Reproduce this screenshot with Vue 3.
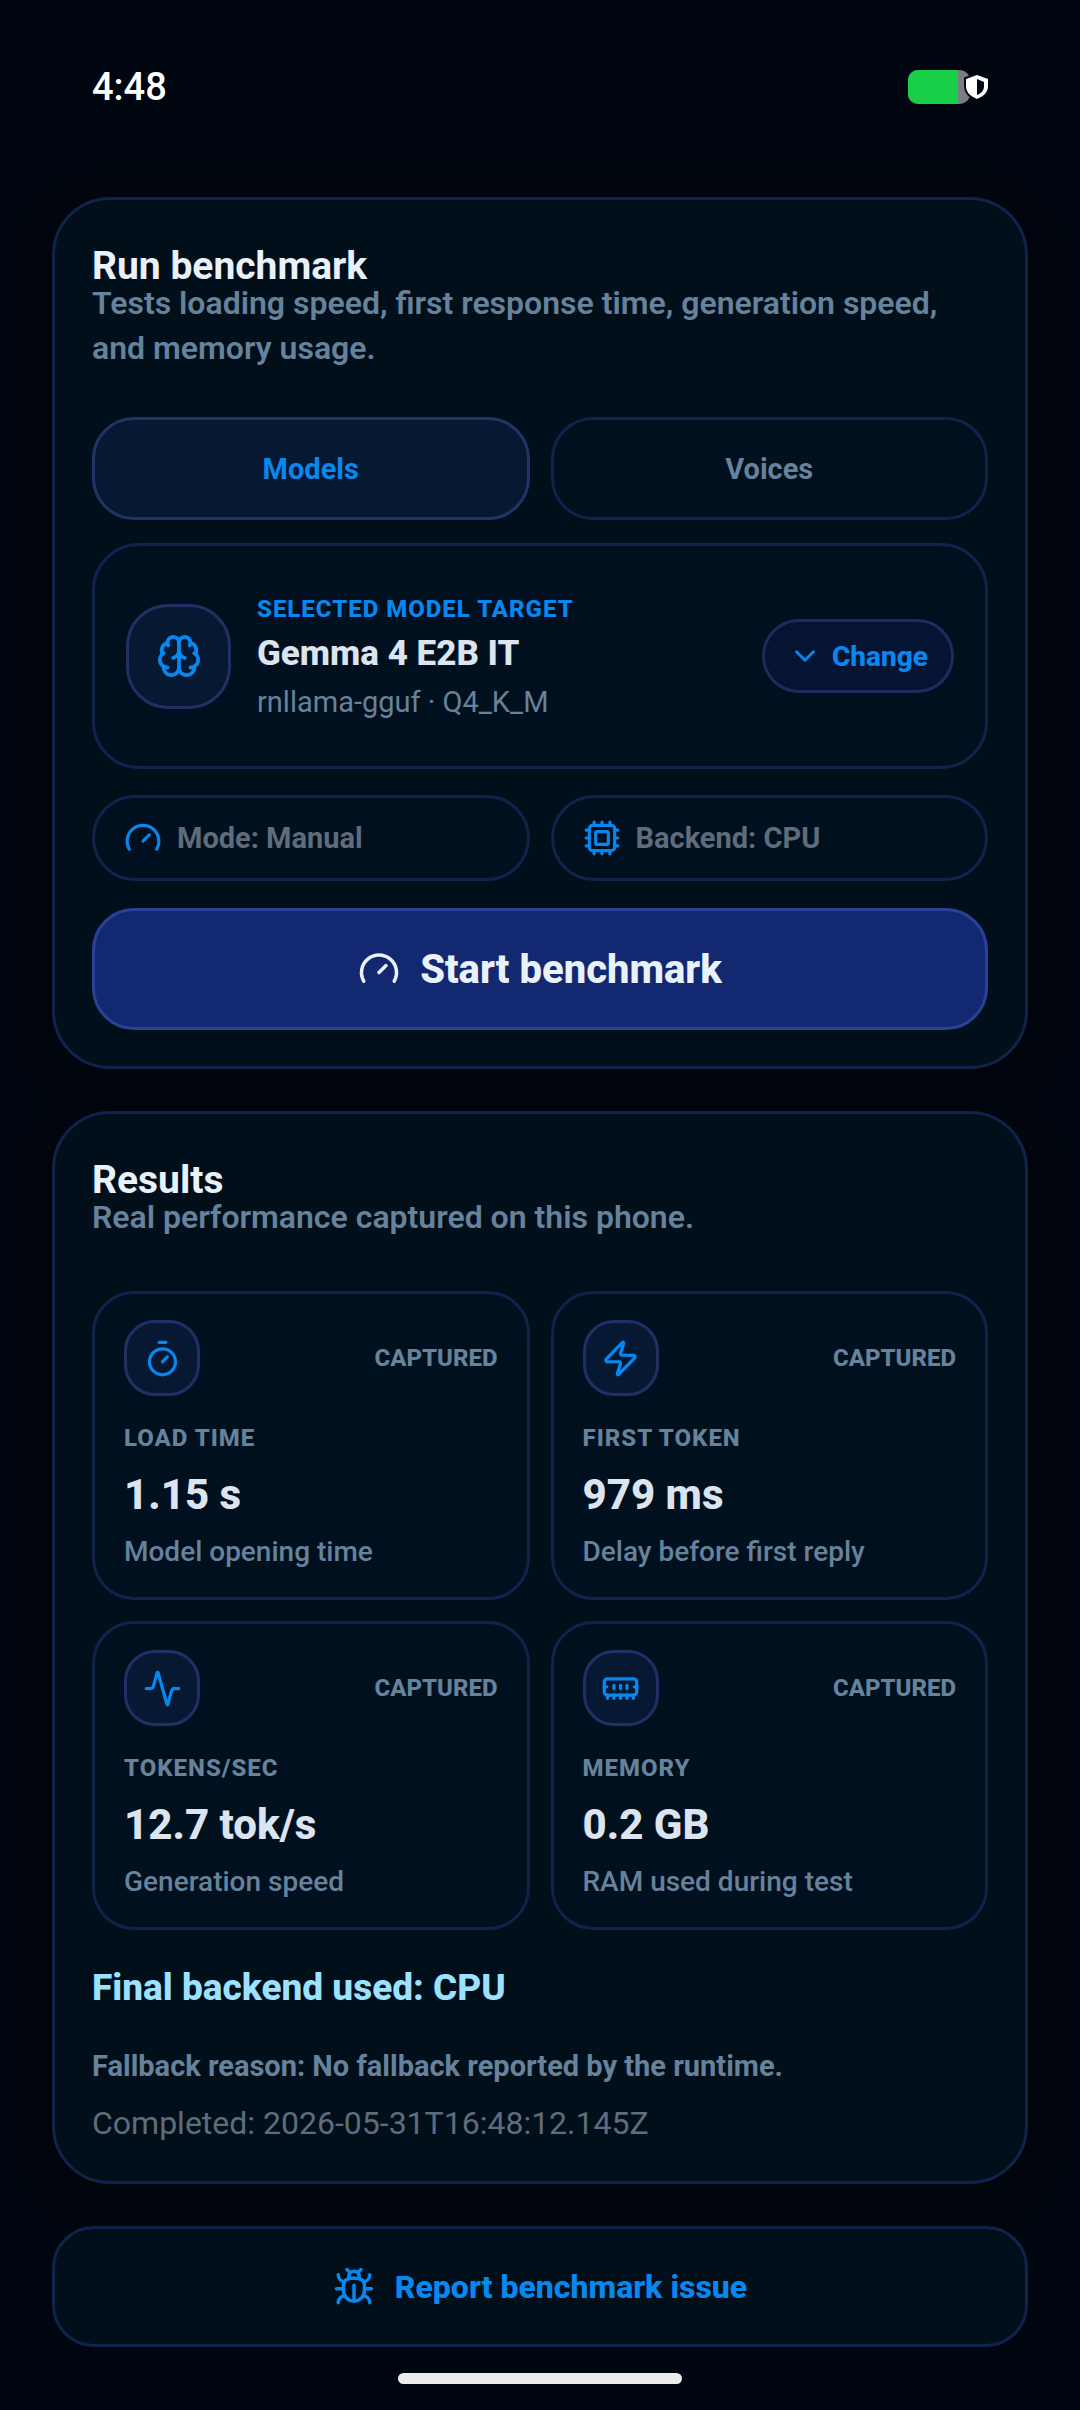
<template>
  <div class="screen">
    <header class="status-bar">
      <span class="clock">4:48</span>
      <svg class="battery" viewBox="0 0 82 36" aria-label="Battery">
        <defs>
          <clipPath id="battery-shape">
            <rect x="1" y="1" width="62" height="34" rx="10" />
          </clipPath>
        </defs>
        <g clip-path="url(#battery-shape)">
          <rect width="64" height="36" fill="#797b85" />
          <rect width="51" height="36" fill="#18cf47" />
        </g>
        <path d="M70 6l11 4v7c0 6-4 10-11 13-7-3-11-7-11-13v-7z" fill="#fff" stroke="#00060f" stroke-width="4" paint-order="stroke" />
        <path d="M70 10l7 3v4c0 4-2 7-7 9z" fill="#00060f" />
      </svg>
    </header>

    <main class="content">
      <section class="card">
        <h2 class="card-title">Run benchmark</h2>
        <p class="card-subtitle">Tests loading speed, first response time, generation speed, and memory usage.</p>

        <div class="tabs">
          <button
            v-for="tab in tabs"
            :key="tab"
            type="button"
            class="tab"
            :class="{ active: tab === activeTab }"
            @click="activeTab = tab"
          >{{ tab }}</button>
        </div>

        <div class="target">
          <span class="icon-box large">
            <svg class="icon icon-brain" viewBox="0 0 24 24"><path v-for="d in icons.brain" :key="d" :d="d" /></svg>
          </span>
          <div class="target-text">
            <span class="target-label">SELECTED MODEL TARGET</span>
            <strong class="target-name">Gemma 4 E2B IT</strong>
            <span class="target-meta">rnllama-gguf · Q4_K_M</span>
          </div>
          <button type="button" class="change">
            <svg class="icon icon-chevron" viewBox="0 0 24 24"><path d="m6 9 6 6 6-6" /></svg>
            Change
          </button>
        </div>

        <div class="chips">
          <div class="chip">
            <svg class="icon icon-chip" viewBox="0 0 24 24"><path v-for="d in icons.gauge" :key="d" :d="d" /></svg>
            Mode: Manual
          </div>
          <div class="chip">
            <svg class="icon icon-chip" viewBox="0 0 24 24"><path v-for="d in icons.cpu" :key="d" :d="d" /></svg>
            Backend: CPU
          </div>
        </div>

        <button type="button" class="start">
          <svg class="icon icon-start" viewBox="0 0 24 24"><path v-for="d in icons.gauge" :key="d" :d="d" /></svg>
          Start benchmark
        </button>
      </section>

      <section class="card">
        <h2 class="card-title">Results</h2>
        <p class="card-subtitle">Real performance captured on this phone.</p>

        <div class="metrics">
          <article v-for="metric in metrics" :key="metric.label" class="metric">
            <div class="metric-head">
              <span class="icon-box">
                <svg class="icon icon-metric" viewBox="0 0 24 24"><path v-for="d in icons[metric.icon]" :key="d" :d="d" /></svg>
              </span>
              <span class="metric-status">CAPTURED</span>
            </div>
            <h3 class="metric-label">{{ metric.label }}</h3>
            <strong class="metric-value">{{ metric.value }}</strong>
            <p class="metric-note">{{ metric.note }}</p>
          </article>
        </div>

        <p class="backend">Final backend used: CPU</p>
        <p class="fallback">Fallback reason: No fallback reported by the runtime.</p>
        <p class="completed">Completed: 2026-05-31T16:48:12.145Z</p>
      </section>

      <button type="button" class="report">
        <svg class="icon icon-report" viewBox="0 0 24 24"><path v-for="d in icons.bug" :key="d" :d="d" /></svg>
        Report benchmark issue
      </button>
    </main>

    <div class="home-bar"></div>
  </div>
</template>

<script setup>
import { ref } from 'vue';

const tabs = ['Models', 'Voices'];
const activeTab = ref('Models');

const metrics = [
  { icon: 'timer', label: 'LOAD TIME', value: '1.15 s', note: 'Model opening time' },
  { icon: 'zap', label: 'FIRST TOKEN', value: '979 ms', note: 'Delay before first reply' },
  { icon: 'activity', label: 'TOKENS/SEC', value: '12.7 tok/s', note: 'Generation speed' },
  { icon: 'memory', label: 'MEMORY', value: '0.2 GB', note: 'RAM used during test' },
];

const icons = {
  brain: [
    'M12 18V5',
    'M15 13a4.17 4.17 0 0 1-3-4 4.17 4.17 0 0 1-3 4',
    'M17.598 6.5A3 3 0 1 0 12 5a3 3 0 1 0-5.598 1.5',
    'M17.997 5.125a4 4 0 0 1 2.526 5.77',
    'M18 18a4 4 0 0 0 2-7.464',
    'M19.967 17.483A4 4 0 1 1 12 18a4 4 0 1 1-7.967-.517',
    'M6 18a4 4 0 0 1-2-7.464',
    'M6.003 5.125a4 4 0 0 0-2.526 5.77',
  ],
  gauge: ['m12 14 4-4', 'M3.34 19a10 10 0 1 1 17.32 0'],
  cpu: [
    'M12 20v2M12 2v2M17 20v2M17 2v2M7 20v2M7 2v2',
    'M2 12h2M2 17h2M2 7h2M20 12h2M20 17h2M20 7h2',
    'M6 4h12a2 2 0 0 1 2 2v12a2 2 0 0 1-2 2H6a2 2 0 0 1-2-2V6a2 2 0 0 1 2-2z',
    'M9 8h6a1 1 0 0 1 1 1v6a1 1 0 0 1-1 1H9a1 1 0 0 1-1-1V9a1 1 0 0 1 1-1z',
  ],
  timer: ['M10 2h4', 'M12 14l3-3', 'M20 14a8 8 0 1 1-16 0 8 8 0 0 1 16 0z'],
  zap: [
    'M4 14a1 1 0 0 1-.78-1.63l9.9-10.2a.5.5 0 0 1 .86.46l-1.92 6.02A1 1 0 0 0 13 10h7a1 1 0 0 1 .78 1.63l-9.9 10.2a.5.5 0 0 1-.86-.46l1.92-6.02A1 1 0 0 0 11 14z',
  ],
  activity: [
    'M22 12h-2.48a2 2 0 0 0-1.93 1.46l-2.35 8.36a.25.25 0 0 1-.48 0L9.24 2.18a.25.25 0 0 0-.48 0l-2.35 8.36A2 2 0 0 1 4.49 12H2',
  ],
  memory: [
    'M8 12v-2M12 12v-2M16 12v-2',
    'M4 18v-2M8 18v-2M12 18v-2M16 18v-2M20 18v-2',
    'M2 11h1.5M20.5 11H22',
    'M4 6h16a2 2 0 0 1 2 2v6a2 2 0 0 1-2 2H4a2 2 0 0 1-2-2V8a2 2 0 0 1 2-2z',
  ],
  bug: [
    'M12 20v-9',
    'M14 7a4 4 0 0 1 4 4v3a6 6 0 0 1-12 0v-3a4 4 0 0 1 4-4z',
    'M14.12 3.88 16 2',
    'M21 21a4 4 0 0 0-3.81-4',
    'M21 5a4 4 0 0 1-3.55 3.97',
    'M22 13h-4',
    'M3 21a4 4 0 0 1 3.81-4',
    'M3 5a4 4 0 0 0 3.55 3.97',
    'M6 13H2',
    'm8 2 1.88 1.88',
    'M9 7.13V6a3 3 0 1 1 6 0v1.13',
  ],
};
</script>

<style>
body {
  margin: 0;
  background: #00060f;
}
</style>

<style scoped>
.screen {
  min-height: 100vh;
  box-sizing: border-box;
  padding-bottom: 26px;
  display: flex;
  flex-direction: column;
  background: #00060f;
  color: #e9f1fb;
  font-family: Roboto, "Liberation Sans", sans-serif;
}
h2, h3, p {
  margin: 0;
}
button {
  font-family: inherit;
  cursor: pointer;
}
.icon {
  flex: none;
  fill: none;
  stroke: currentColor;
  stroke-width: 2;
  stroke-linecap: round;
  stroke-linejoin: round;
}

/* status bar */
.status-bar {
  display: flex;
  align-items: center;
  justify-content: space-between;
  height: 174px;
  padding: 0 91px 0 92px;
  box-sizing: border-box;
}
.clock {
  font-size: 38px;
  font-weight: 500;
  color: #fff;
}
.battery {
  width: 82px;
  height: 36px;
}

/* cards */
.content {
  display: flex;
  flex-direction: column;
  gap: 42px;
  padding: 23px 52px 0;
}
.card {
  padding: 51px 37px 36px;
  border: 3px solid #11224b;
  border-radius: 58px;
  background: #010f1b;
  box-shadow: 0 12px 40px rgba(0, 0, 0, 0.25);
}
.card-title {
  font-size: 39px;
  line-height: 30px;
  font-weight: 700;
}
.card-subtitle {
  font-size: 32px;
  line-height: 45px;
  font-weight: 600;
  color: #67829b;
}

/* target picker */
.tabs, .chips, .metrics {
  display: grid;
  grid-template-columns: 1fr 1fr;
  gap: 21px;
}
.tabs {
  margin-top: 46px;
}
.tab {
  height: 103px;
  border: 3px solid #11224b;
  border-radius: 42px;
  background: #01101f;
  color: #67829b;
  font-size: 29px;
  font-weight: 700;
}
.tab.active {
  border-color: #203468;
  background: #061832;
  color: #0888ee;
}
.target {
  display: flex;
  align-items: center;
  gap: 26px;
  margin-top: 23px;
  padding: 46px 31px;
  border: 3px solid #11224b;
  border-radius: 47px;
  background: #01101f;
}
.icon-box {
  flex: none;
  display: flex;
  align-items: center;
  justify-content: center;
  width: 76px;
  height: 76px;
  box-sizing: border-box;
  border: 3px solid #203064;
  border-radius: 31px;
  background: #061832;
  color: #0888ee;
}
.icon-box.large {
  width: 105px;
  height: 105px;
  border-radius: 42px;
}
.icon-brain {
  width: 46px;
  height: 46px;
}
.target-text {
  flex: 1;
  display: flex;
  flex-direction: column;
  gap: 8px;
  padding-top: 2px;
}
.target-label {
  font-size: 24px;
  line-height: 30px;
  font-weight: 800;
  letter-spacing: 1px;
  color: #0888ee;
}
.target-name {
  font-size: 35px;
  line-height: 44px;
  font-weight: 800;
  color: #dce5ef;
}
.target-meta {
  font-size: 29px;
  line-height: 36px;
  color: #67829b;
}
.change {
  display: flex;
  align-items: center;
  gap: 10px;
  height: 74px;
  padding: 0 23px;
  border: 3px solid #1d2b60;
  border-radius: 37px;
  background: #051432;
  color: #0888ee;
  font-size: 28px;
  font-weight: 800;
}
.icon-chevron {
  width: 34px;
  height: 34px;
}
.chips {
  margin-top: 26px;
}
.chip {
  display: flex;
  align-items: center;
  gap: 15px;
  height: 86px;
  padding: 0 29px;
  box-sizing: border-box;
  border: 3px solid #11224b;
  border-radius: 43px;
  background: #01101e;
  color: #5f6c7b;
  font-size: 29px;
  font-weight: 700;
}
.icon-chip {
  width: 38px;
  height: 38px;
  color: #0888ee;
}
.start {
  display: flex;
  align-items: center;
  justify-content: center;
  gap: 20px;
  width: 100%;
  height: 122px;
  margin-top: 27px;
  border: 3px solid #2a4296;
  border-radius: 42px;
  background: #122870;
  color: #e9f1fb;
  font-size: 40px;
  font-weight: 800;
}
.icon-start {
  width: 42px;
  height: 42px;
}

/* results */
.metrics {
  margin-top: 51px;
}
.metric {
  padding: 26px 29px;
  border: 3px solid #11224b;
  border-radius: 42px;
  background: #01101f;
}
.metric-head {
  display: flex;
  align-items: center;
  justify-content: space-between;
}
.icon-metric {
  width: 39px;
  height: 39px;
}
.metric-status {
  font-size: 24px;
  font-weight: 800;
  color: #67829b;
}
.metric-label {
  margin-top: 27px;
  font-size: 24px;
  line-height: 30px;
  font-weight: 800;
  letter-spacing: 1px;
  color: #67829b;
}
.metric-value {
  display: block;
  margin-top: 17px;
  font-size: 42px;
  line-height: 50px;
  font-weight: 800;
  color: #dce5ef;
}
.metric-note {
  margin-top: 13px;
  font-size: 28px;
  line-height: 38px;
  font-weight: 500;
  color: #67829b;
}
.backend {
  margin-top: 36px;
  font-size: 37px;
  line-height: 44px;
  font-weight: 800;
  color: #9ce2ff;
}
.fallback {
  margin-top: 36px;
  font-size: 29px;
  line-height: 40px;
  font-weight: 700;
  color: #67829b;
}
.completed {
  margin-top: 17px;
  padding-bottom: 2px;
  font-size: 32px;
  line-height: 40px;
  color: #5f6c7b;
}
.report {
  display: flex;
  align-items: center;
  justify-content: center;
  gap: 20px;
  height: 121px;
  border: 3px solid #11224b;
  border-radius: 42px;
  background: #010f1b;
  color: #0888ee;
  font-size: 32px;
  font-weight: 800;
}
.icon-report {
  width: 42px;
  height: 42px;
}
.home-bar {
  align-self: center;
  width: 284px;
  height: 11px;
  margin-top: auto;
  border-radius: 6px;
  background: #ececec;
}
</style>
